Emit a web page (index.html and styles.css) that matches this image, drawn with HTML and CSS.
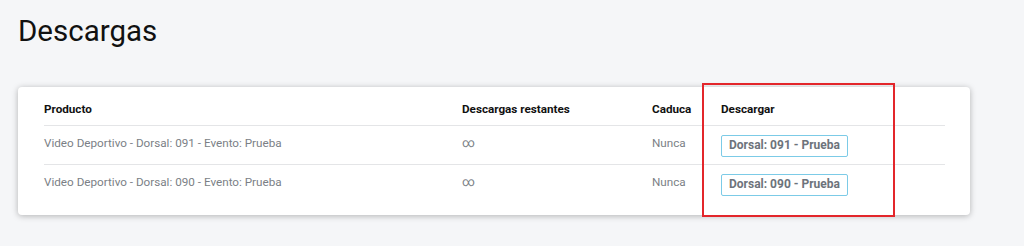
FILE: index.html
```html
<!DOCTYPE html>
<html lang="es">
<head>
<meta charset="utf-8">
<title>Descargas</title>
<link rel="stylesheet" href="styles.css">
</head>
<body>
<h1 class="title">Descargas</h1>
<section class="card">
  <table class="downloads">
    <colgroup>
      <col class="c-product">
      <col class="c-remaining">
      <col class="c-expires">
      <col class="c-download">
    </colgroup>
    <thead>
      <tr>
        <th>Producto</th>
        <th>Descargas restantes</th>
        <th>Caduca</th>
        <th>Descargar</th>
      </tr>
    </thead>
    <tbody>
      <tr>
        <td>Video Deportivo - Dorsal: 091 - Evento: Prueba</td>
        <td class="inf">∞</td>
        <td>Nunca</td>
        <td><a class="btn" href="#">Dorsal: 091 - Prueba</a></td>
      </tr>
      <tr>
        <td>Video Deportivo - Dorsal: 090 - Evento: Prueba</td>
        <td class="inf">∞</td>
        <td>Nunca</td>
        <td><a class="btn" href="#">Dorsal: 090 - Prueba</a></td>
      </tr>
    </tbody>
  </table>
  <div class="highlight"></div>
</section>
</body>
</html>
```

FILE: styles.css
```css
html, body {
  margin: 0;
  padding: 0;
}
body {
  background: #f5f6f8;
  font-family: Roboto, "Liberation Sans", Arial, sans-serif;
  color: #111;
  width: 1024px;
  height: 246px;
  overflow: hidden;
}
.title {
  margin: 14px 0 0 18px;
  font-size: 29.5px;
  font-weight: 400;
  line-height: 34px;
  color: #111;
}
.card {
  position: relative;
  margin: 39px 0 0 18px;
  width: 952px;
  box-sizing: border-box;
  padding: 5px 25px 12px 26px;
  background: #fff;
  border-radius: 4px;
  box-shadow: 0 1px 6px rgba(0, 0, 0, 0.28);
}
.downloads {
  width: 901px;
  table-layout: fixed;
  border-collapse: collapse;
  font-size: 11.7px;
  line-height: 16px;
}
.c-product { width: 418px; }
.c-remaining { width: 190px; }
.c-expires { width: 69px; }
.c-download { width: 224px; }
.downloads th {
  text-align: left;
  font-weight: 700;
  color: #111;
  padding: 9px 0 8px;
  border-bottom: 1px solid #e4e5e7;
  vertical-align: top;
}
.downloads td {
  padding: 9px 0 7px;
  height: 22px;
  color: #7b7f86;
  vertical-align: top;
  white-space: nowrap;
}
.downloads tbody tr + tr td {
  border-top: 1px solid #e4e5e7;
}
.downloads td.inf {
  font-size: 12.5px;
}
.btn {
  display: inline-block;
  vertical-align: top;
  box-sizing: border-box;
  width: 127px;
  height: 22px;
  line-height: 19px;
  border: 1.5px solid #7ccbe7;
  border-radius: 2px;
  text-align: center;
  font-weight: 700;
  color: #6d737b;
  text-decoration: none;
  font-size: 12px;
}
.highlight {
  position: absolute;
  left: 684px;
  top: -4px;
  width: 193px;
  height: 134px;
  box-sizing: border-box;
  border: 2px solid #e3262b;
  pointer-events: none;
}
```
